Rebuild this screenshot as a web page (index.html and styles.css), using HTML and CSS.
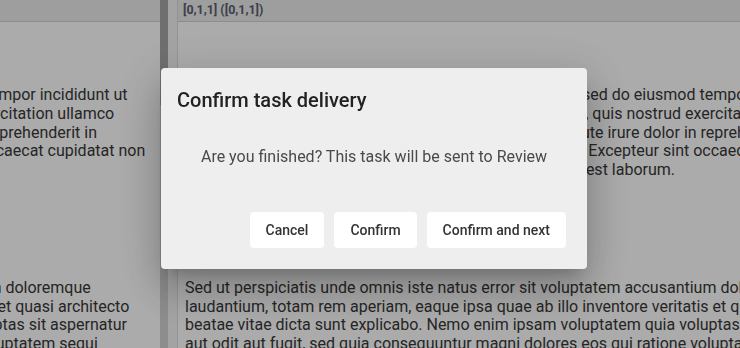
FILE: index.html
```html
<!DOCTYPE html>
<html lang="en">
<head>
    <meta charset="UTF-8">
    <meta name="viewport" content="width=device-width, initial-scale=1.0">
    <title>Confirm task delivery</title>
    <link rel="stylesheet" href="styles.css">
</head>
<body>
    <div class="page">
        <div class="pane pane-left">
            <div class="pane-header"></div>
            <div class="text shifted">
                <div class="para">
                    <div>Lorem ipsum dolor sit amet, consectetur adipiscing elit, sed do eiusmod tempor incididunt ut</div>
                    <div>labore et dolore magna aliqua. Ut enim ad minim veniam, quis nostrud exercitation ullamco</div>
                    <div>laboris nisi ut aliquip ex ea commodo consequat. Duis aute irure dolor in reprehenderit in</div>
                    <div>voluptate velit esse cillum dolore eu fugiat nulla pariatur. Excepteur sint occaecat cupidatat non</div>
                    <div>proident, sunt in culpa qui officia deserunt mollit anim id est laborum.</div>
                </div>
                <div class="para">
                    <div>Sed ut perspiciatis unde omnis iste natus error sit voluptatem accusantium doloremque</div>
                    <div>laudantium, totam rem aperiam, eaque ipsa quae ab illo inventore veritatis et quasi architecto</div>
                    <div>beatae vitae dicta sunt explicabo. Nemo enim ipsam voluptatem quia voluptas sit aspernatur</div>
                    <div>aut odit aut fugit, sed quia consequuntur magni dolores eos qui ratione voluptatem sequi</div>
                </div>
            </div>
        </div>

        <div class="scrollbar">
            <div class="thumb"></div>
        </div>
        <div class="gutter"></div>

        <div class="pane pane-right">
            <div class="pane-header">[0,1,1] ([0,1,1])</div>
            <div class="text">
                <div class="para">
                    <div>Lorem ipsum dolor sit amet, consectetur adipiscing elit, sed do eiusmod tempor incididunt ut</div>
                    <div>labore et dolore magna aliqua. Ut enim ad minim veniam, quis nostrud exercitation ullamco</div>
                    <div>laboris nisi ut aliquip ex ea commodo consequat. Duis aute irure dolor in reprehenderit in</div>
                    <div>voluptate velit esse cillum dolore eu fugiat nulla pariatur. Excepteur sint occaecat cupidatat non</div>
                    <div>proident, sunt in culpa qui officia deserunt mollit anim id est laborum.</div>
                </div>
                <div class="para">
                    <div>Sed ut perspiciatis unde omnis iste natus error sit voluptatem accusantium doloremque</div>
                    <div>laudantium, totam rem aperiam, eaque ipsa quae ab illo inventore veritatis et quasi architecto</div>
                    <div>beatae vitae dicta sunt explicabo. Nemo enim ipsam voluptatem quia voluptas sit aspernatur</div>
                    <div>aut odit aut fugit, sed quia consequuntur magni dolores eos qui ratione voluptatem sequi</div>
                </div>
            </div>
        </div>
    </div>

    <div class="backdrop">
        <div class="dialog" role="dialog">
            <h2 class="dialog-title">Confirm task delivery</h2>
            <p class="dialog-body">Are you finished? This task will be sent to Review</p>
            <div class="dialog-actions">
                <button type="button">Cancel</button>
                <button type="button">Confirm</button>
                <button type="button">Confirm and next</button>
            </div>
        </div>
    </div>
</body>
</html>
```

FILE: styles.css
```css
* {
    margin: 0;
    padding: 0;
    box-sizing: border-box;
    font-family: Roboto, "Liberation Sans", sans-serif;
}
body {
    background: #ffffff;
    color: #383838;
    overflow: hidden;
}
.page {
    display: flex;
    height: 100vh;
}
.pane {
    overflow: hidden;
    display: flex;
    flex-direction: column;
}
.pane-left {
    width: 160px;
    flex: none;
}
.pane-right {
    flex: 1;
    border-left: 1px solid #dcdcdc;
}
.pane-header {
    height: 22px;
    flex: none;
    background: #ececec;
    border-bottom: 1px solid #d2d2d2;
    padding: 2px 0 0 5px;
    font-size: 12.4px;
    font-weight: 700;
    color: #5a6070;
    white-space: nowrap;
}
.text {
    padding: 64px 0 0 7px;
    font-size: 16px;
    line-height: 18.75px;
    white-space: nowrap;
}
.text.shifted {
    margin-left: -537px;
}
.para + .para {
    margin-top: 99px;
}
.scrollbar {
    width: 8px;
    flex: none;
    background: #d2d2d2;
}
.thumb {
    height: 105px;
    background: #a6a6a6;
}
.gutter {
    width: 9px;
    flex: none;
    background: #f4f4f4;
}

/* modal */
.backdrop {
    position: fixed;
    inset: 0;
    background: rgba(0, 0, 0, 0.33);
}
.dialog {
    position: absolute;
    left: 161px;
    top: 68px;
    width: 426px;
    height: 201px;
    background: #eeeeee;
    border-radius: 4px;
    padding: 16px 21px 21px 16px;
    display: flex;
    flex-direction: column;
    box-shadow: 0 11px 15px -7px rgba(0, 0, 0, 0.2),
                0 24px 38px 3px rgba(0, 0, 0, 0.14),
                0 9px 46px 8px rgba(0, 0, 0, 0.12);
}
.dialog-title {
    font-size: 20px;
    font-weight: 500;
    line-height: 32px;
    color: #222222;
}
.dialog-body {
    margin-top: 29px;
    font-size: 16px;
    line-height: 24px;
    color: #4a4a4a;
    text-align: center;
    padding-left: 5px;
}
.dialog-actions {
    margin-top: auto;
    display: flex;
    justify-content: flex-end;
    gap: 10px;
}
.dialog-actions button {
    height: 36px;
    padding: 0 16px;
    background: #ffffff;
    border: none;
    border-radius: 4px;
    font-size: 14px;
    font-weight: 500;
    color: #333333;
    cursor: pointer;
}
```
